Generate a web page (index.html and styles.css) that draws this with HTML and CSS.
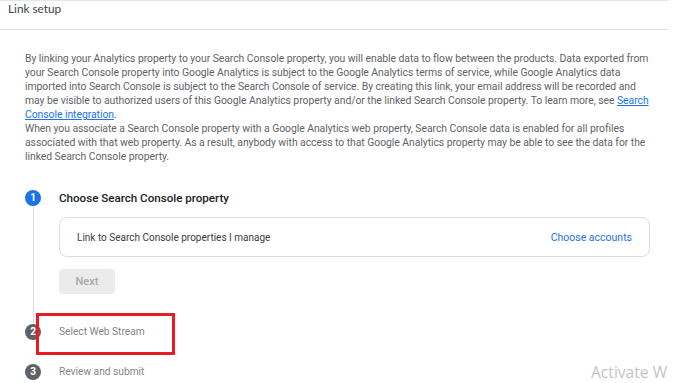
FILE: index.html
```html
<!DOCTYPE html>
<html lang="en">
<head>
    <meta charset="UTF-8">
    <meta name="viewport" content="width=device-width, initial-scale=1.0">
    <title>Link setup</title>
    <link rel="stylesheet" href="styles.css">
</head>
<body>
    <div class="header">Link setup</div>

    <div class="content">
        <p class="intro">
            By linking your Analytics property to your Search Console property, you will enable data to flow between the products. Data exported from your Search Console property into Google Analytics is subject to the Google Analytics terms of service, while Google Analytics data imported into Search Console is subject to the Search Console of service. By creating this link, your email address will be recorded and may be visible to authorized users of this Google Analytics property and/or the linked Search Console property. To learn more, see <a href="#">Search Console integration</a>.<br>
            When you associate a Search Console property with a Google Analytics web property, Search Console data is enabled for all profiles associated with that web property. As a result, anybody with access to that Google Analytics property may be able to see the data for the linked Search Console property.
        </p>

        <div class="stepper">
            <div class="step step-active">
                <div class="rail">
                    <span class="dot dot-blue">1</span>
                    <span class="rail-line"></span>
                </div>
                <div class="step-body">
                    <div class="step-title">Choose Search Console property</div>
                    <div class="card">
                        <span>Link to Search Console properties I manage</span>
                        <a href="#" class="card-link">Choose accounts</a>
                    </div>
                    <button class="next-btn" disabled>Next</button>
                </div>
            </div>

            <div class="step step-second">
                <div class="rail">
                    <span class="dot">2</span>
                </div>
                <div class="step-body">
                    <div class="step-title muted">Select Web Stream</div>
                </div>
                <!-- annotation box drawn over the screenshot -->
                <div class="highlight"></div>
            </div>

            <div class="step">
                <div class="rail">
                    <span class="dot">3</span>
                </div>
                <div class="step-body">
                    <div class="step-title muted">Review and submit</div>
                </div>
            </div>
        </div>
    </div>

    <div class="watermark">Activate W</div>
</body>
</html>
```

FILE: styles.css
```css
* {
    margin: 0;
    padding: 0;
    box-sizing: border-box;
}

body {
    background: #fff;
    font-family: Roboto, 'Liberation Sans', sans-serif;
    position: relative;
    width: 686px;
    height: 383px;
    overflow: hidden;
}

.header {
    width: 668px;
    height: 30px;
    border-top: 1px solid #e6e6e6;
    border-bottom: 1px solid #e0e0e0;
    padding: 1px 0 0 8px;
    font-family: Lato, 'Open Sans', sans-serif;
    font-size: 11.8px;
    line-height: 14px;
    color: #3c4043;
}

.content {
    width: 660px;
    padding: 22px 0 0 25px;
}

.intro {
    width: 628px;
    font-size: 10.4px;
    letter-spacing: -0.05px;
    line-height: 14px;
    color: #5f6368;
}

.intro a {
    color: #1a73e8;
    text-decoration: underline;
}

.stepper {
    width: 625px;
    margin-top: 26px;
}

.step {
    display: flex;
    position: relative;
    padding-bottom: 24px;
}

.step-active,
.step:last-child {
    padding-bottom: 0;
}

.rail {
    width: 34px;
    display: flex;
    flex-direction: column;
    align-items: flex-start;
}

.dot {
    width: 16px;
    height: 16px;
    border-radius: 50%;
    background: #5f6368;
    color: #fff;
    font-size: 10px;
    font-weight: 700;
    line-height: 16px;
    text-align: center;
}

.dot-blue {
    background: #1a73e8;
}

.rail-line {
    flex: 1;
    width: 1px;
    margin-left: 8px;
    background: #e0e0e0;
}

.step-body {
    flex: 1;
}

.step-active .step-body {
    padding-bottom: 30px;
}

.step-title {
    font-size: 11.6px;
    font-weight: 500;
    line-height: 16px;
    color: #202124;
}

.step-title.muted {
    font-size: 10.2px;
    font-weight: 400;
    color: #80868b;
}

.card {
    margin-top: 11px;
    height: 40px;
    border: 1px solid #dadce0;
    border-radius: 8px;
    display: flex;
    align-items: center;
    justify-content: space-between;
    padding: 0 17px 0 17px;
    font-size: 10px;
    color: #3c4043;
}

.card-link {
    color: #1a73e8;
    text-decoration: none;
    font-size: 10.5px;
}

.next-btn {
    display: block;
    margin-top: 12px;
    width: 56px;
    height: 25px;
    border: none;
    border-radius: 4px;
    background: #ebebeb;
    color: #a8a8a8;
    font-family: Roboto, sans-serif;
    font-size: 11px;
    font-weight: 500;
}

.highlight {
    position: absolute;
    left: 11px;
    top: -11px;
    width: 139px;
    height: 42px;
    border: 3px solid #e81c24;
}

.watermark {
    position: absolute;
    left: 591px;
    top: 361px;
    font-family: 'Open Sans', sans-serif;
    font-size: 15.6px;
    color: #c4c4c4;
}
```
